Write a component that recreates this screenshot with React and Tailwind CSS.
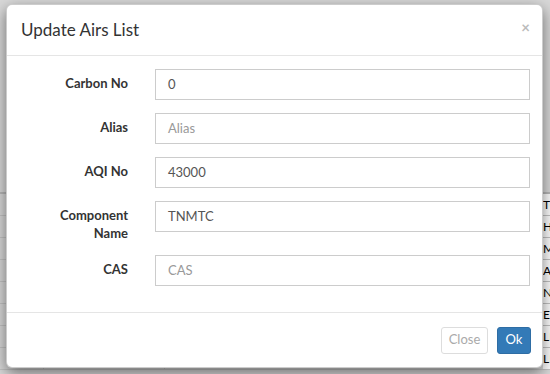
import React from "react";

const rows = [
  { label: "Carbon No", value: "0" },
  { label: "Alias", placeholder: "Alias" },
  { label: "AQI No", value: "43000" },
  { label: "Component Name", value: "TNMTC", two: true },
  { label: "CAS", placeholder: "CAS" },
];

const bgRows = ["TO", "HO", "MI", "AR", "NA", "EL", "LEA", "LEB"];

export default function App() {
  return (
    <div className="relative w-[550px] h-[374px] overflow-hidden bg-[#d9d9d9] font-['Lato',sans-serif]">
      {/* background page table */}
      <div className="flex flex-col pt-[172px]">
        <div className="h-[22px] border-b-2 border-[#b9b9b9]" />
        {bgRows.map((t, i) => (
          <div key={i} className="h-[22px] border-b border-[#c4c4c4] flex">
            <div className="w-[44px] border-r border-[#c4c4c4]" />
            <div className="w-[121px] border-r border-[#c4c4c4]" />
            <div className="flex-1" />
            <div className="w-[7px] bg-white text-[12px] leading-[22px] text-black overflow-hidden whitespace-nowrap">{t}</div>
          </div>
        ))}
      </div>

      {/* modal */}
      <div className="absolute left-[6px] top-[4px] w-[537px] h-[364px] bg-white rounded-[6px] border border-black/20 shadow-[0_5px_15px_rgba(0,0,0,0.5)] flex flex-col">
        <div className="h-[51px] flex items-center justify-between pl-[14px] pr-[12px] border-b border-[#e5e5e5]">
          <h4 className="text-[17px] text-[#333] font-normal">Update Airs List</h4>
          <span className="text-[#bbb] text-[15px] font-bold leading-none -mt-[5px]">×</span>
        </div>
        <div className="flex-1 flex flex-col gap-[13px] pt-[13px] pr-[12px]">
          {rows.map((r) => (
            <div key={r.label} className="flex">
              <label className="w-[121px] text-right text-[13px] font-bold text-[#333] leading-[18px] pt-[5px] pl-[40px]">
                {r.label}
              </label>
              <div className="ml-[27px] flex-1">
                <div className={`h-[31px] border border-[#ccc] px-[12px] flex items-center text-[13px] ${r.value ? "text-[#555]" : "text-[#999]"}`}>
                  {r.value ?? r.placeholder}
                </div>
              </div>
            </div>
          ))}
        </div>
        <div className="h-[55px] border-t border-[#e5e5e5] flex items-center justify-end gap-[9px] pr-[11px]">
          <button className="h-[27px] w-[47px] rounded-[3px] border border-[#ddd] bg-white text-[#aaa] text-[13px]">Close</button>
          <button className="h-[27px] w-[34px] rounded-[3px] border border-[#2e6da4] bg-[#337ab7] text-white text-[13px]">Ok</button>
        </div>
      </div>
    </div>
  );
}
